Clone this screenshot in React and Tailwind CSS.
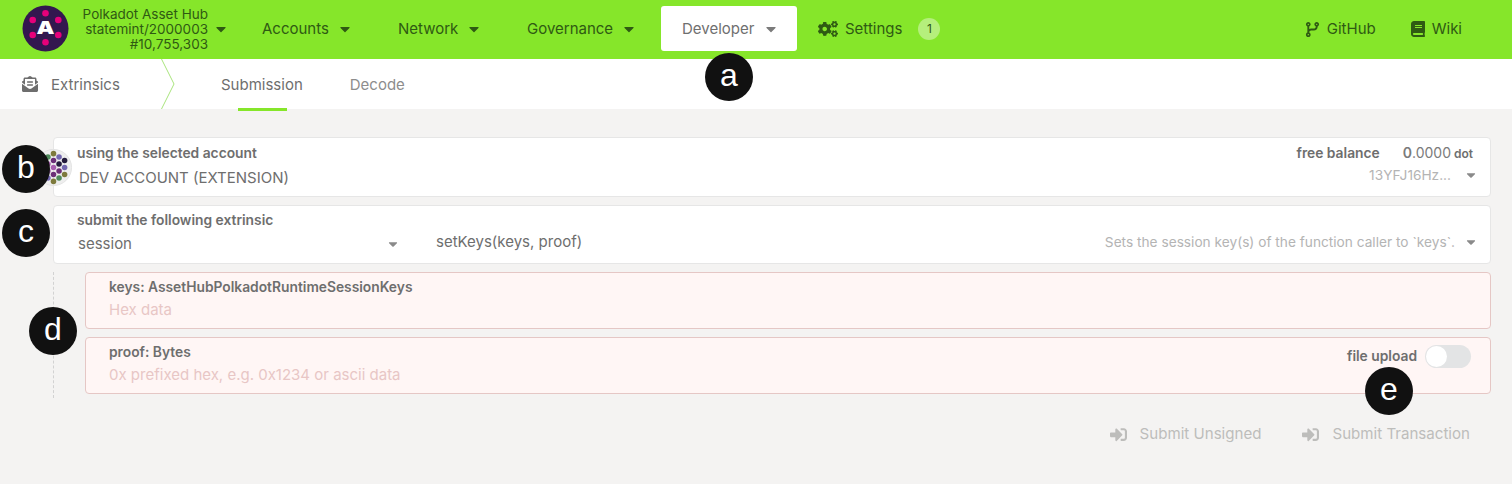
import React from "react";
import { FaCaretDown, FaCogs, FaBook, FaEnvelopeOpenText, FaSignInAlt } from "react-icons/fa";
import { FaCodeBranch } from "react-icons/fa6";

const Caret = ({ className }) => <FaCaretDown className={`text-[16px] shrink-0 ${className}`} />;

const NavItem = ({ label, width }) => (
  <div className={`flex items-center justify-between h-[45px] pl-[21px] pr-[19px] pt-[1px] text-[#2f5a13] ${width}`}>
    <span>{label}</span>
    <Caret />
  </div>
);

// little dotted identicon next to the account
const Identicon = () => {
  const dots = [
    [20, 5, "#7d7a3c"], [20, 12.5, "#6b2f78"], [20, 20, "#a85fb0"], [20, 27.5, "#6b2f78"], [20, 35, "#7d7a3c"],
    [26, 8.75, "#7468b0"], [26, 16.25, "#231a3c"], [26, 23.75, "#6b2f78"], [26, 31.25, "#4f8a5c"],
    [32, 12.5, "#231a3c"], [32, 20, "#7468b0"], [32, 27.5, "#7d7a3c"],
    [14, 8.75, "#4f8a5c"], [14, 16.25, "#a85fb0"], [14, 23.75, "#a85fb0"], [14, 31.25, "#7468b0"],
    [8, 12.5, "#4f8a5c"], [8, 20, "#a05ca8"], [8, 27.5, "#7468b0"],
  ];
  return (
    <svg viewBox="0 0 40 40" className="w-[37px] h-[37px]">
      <circle cx="20" cy="20" r="19.5" fill="#eeeeee" stroke="#e2e2e2" />
      {dots.map(([cx, cy, fill], i) => (
        <circle key={i} cx={cx} cy={cy} r="3" fill={fill} />
      ))}
    </svg>
  );
};

const Logo = () => (
  <svg viewBox="0 0 47 47" className="w-[47px] h-[47px] shrink-0">
    <circle cx="23.5" cy="23.5" r="23" fill="#33174f" />
    {[[23.5, 8.3], [10.7, 15], [36.3, 15], [10.7, 30], [36.3, 30], [23.5, 37.3]].map(([cx, cy], i) => (
      <circle key={i} cx={cx} cy={cy} r="3.3" fill="#e6007a" />
    ))}
    <text x="23.5" y="28.5" textAnchor="middle" fill="#ffffff" fontSize="18" fontWeight="900" fontFamily="Inter, sans-serif" textLength="18" lengthAdjust="spacingAndGlyphs">A</text>
  </svg>
);

const Badge = ({ letter, className }) => (
  <div className={`absolute w-[48px] h-[48px] rounded-full bg-[#111111] text-white flex items-center justify-center text-[32px] leading-none pb-[4px] z-10 font-['Liberation_Sans',sans-serif] ${className}`}>
    {letter}
  </div>
);

const SubmitButton = ({ label, className }) => (
  <div className={`flex items-center gap-[13px] text-[15.1px] text-[#bdbdbb] ${className}`}>
    <FaSignInAlt className="text-[17px]" />
    <span>{label}</span>
  </div>
);

export default function App() {
  return (
    <div className="relative w-[1512px] h-[484px] overflow-hidden bg-[#f4f3f2] font-['Inter',sans-serif] text-[15px] text-[#6e6e6e]">
      {/* Top menu */}
      <header className="flex items-center h-[59px] bg-[#86e62a] pl-[22px] pb-[2px]">
        <Logo />
        <div className="flex items-center w-[172px] pl-[12px] gap-[5px] text-[#2f5a13]">
          <div className="text-right pt-[2px] leading-[15px] text-[13.5px] w-[127px] whitespace-nowrap">
            <div>Polkadot Asset Hub</div>
            <div>statemint/2000003</div>
            <div>#10,755,303</div>
          </div>
          <Caret />
        </div>
        <div className="flex items-center gap-[5px]">
          <NavItem label="Accounts" width="w-[131px]" />
          <NavItem label="Network" width="w-[124px]" />
          <NavItem label="Governance" width="w-[150px]" />
          <div className="flex items-center justify-between w-[136px] h-[45px] pl-[21px] pr-[18px] pt-[1px] bg-white rounded-[3px] text-[#6f6f6f]">
            <span>Developer</span>
            <Caret className="text-[#7b7b7b]" />
          </div>
          <div className="flex items-center h-[45px] pl-[16px] pt-[1px] text-[#2f5a13]">
            <FaCogs className="text-[20px] mr-[7px]" />
            <span>Settings</span>
            <span className="ml-[16px] w-[22px] h-[22px] rounded-full bg-[#b5ef7c] flex items-center justify-center text-[12px]">1</span>
          </div>
        </div>
        <div className="flex items-center ml-auto pr-[50px] pt-[1px] text-[#2f5a13]">
          <FaCodeBranch className="text-[15px] mr-[7px]" />
          <span>GitHub</span>
          <FaBook className="text-[16px] ml-[34px] mr-[6px]" />
          <span>Wiki</span>
        </div>
      </header>

      {/* Tabs */}
      <nav className="flex items-center h-[50px] bg-white pl-[22px]">
        <FaEnvelopeOpenText className="text-[16px] text-[#6e6e6e] mr-[13px]" />
        <span className="w-[42px] whitespace-nowrap pt-[2px]">Extrinsics</span>
        <svg viewBox="0 0 14 50" className="w-[14px] h-[50px] ml-[68px]">
          <path d="M0.5 0 L13 25 L0.5 50" fill="none" stroke="#a9e47c" strokeWidth="1" />
        </svg>
        <div className="relative flex items-center justify-center h-full ml-[46px] pt-[2px]">
          <span>Submission</span>
          <div className="absolute left-[17px] right-[16px] -bottom-[2px] h-[3px] bg-[#86e62a]" />
        </div>
        <span className="ml-[47px] pt-[2px] text-[#8d8d8d]">Decode</span>
      </nav>

      {/* Form */}
      <main className="flex flex-col pl-[53px] pr-[21px] pt-[28px]">
        <section className="relative flex justify-between h-[60px] mb-[8px] bg-white border border-[#e6e6e6] rounded-[4px] pl-[23px] pr-[12px]">
          <div className="absolute -left-[19px] top-[11px]">
            <Identicon />
          </div>
          <div>
            <div className="text-[13.8px] font-semibold leading-[16px] mt-[7px]">using the selected account</div>
            <div className="ml-[2px] mt-[8px] text-[15px] leading-[18px]">DEV ACCOUNT (EXTENSION)</div>
          </div>
          <div className="flex flex-col items-end">
            <div className="flex items-baseline mt-[6px] pr-[5px] text-[13.8px] leading-[18px] font-semibold">
              <span>free balance</span>
              <span className="ml-[23px] text-[14px] text-[#7b7b7b]">0<span className="font-normal">.0000</span></span>
              <span className="ml-[3px] text-[12px]">dot</span>
            </div>
            <div className="flex items-center gap-[13px] mt-[2px] text-[13.7px] text-[#b4b4b4]">
              <span>13YFJ16Hz...</span>
              <Caret className="text-[#8a8a8a] !text-[14px]" />
            </div>
          </div>
        </section>

        <section className="flex h-[59px] mb-[8px] bg-white border border-[#e6e6e6] rounded-[4px] pl-[23px] pr-[12px]">
          <div className="w-[359px] pr-[36px]">
            <div className="text-[13.8px] font-semibold leading-[16px] mt-[6px]">submit the following extrinsic</div>
            <div className="flex items-center justify-between mt-[7px] leading-[18px] pl-[1px]">
              <span>session</span>
              <Caret className="text-[#8a8a8a] !text-[14px]" />
            </div>
          </div>
          <div className="flex flex-1 items-center justify-between pt-[15px]">
            <span>setKeys(keys, proof)</span>
            <div className="flex items-center gap-[9px] text-[13.7px] text-[#b4b4b4]">
              <span>Sets the session key(s) of the function caller to `keys`.</span>
              <Caret className="text-[#8a8a8a] !text-[14px]" />
            </div>
          </div>
        </section>

        <div className="flex border-l border-dashed border-[#d2d2d2] pb-[4px]">
          <div className="flex flex-col flex-1 gap-[8px] ml-[31px]">
            <section className="h-[57px] bg-[#fff6f5] border border-[#e5c7c5] rounded-[4px] pl-[23px]">
              <div className="text-[13.8px] font-semibold leading-[16px] mt-[6px]">keys: AssetHubPolkadotRuntimeSessionKeys</div>
              <div className="mt-[6px] leading-[18px] text-[#e8c6c5]">Hex data</div>
            </section>
            <section className="flex justify-between h-[57px] bg-[#fff6f5] border border-[#e5c7c5] rounded-[4px] pl-[23px] pr-[19px]">
              <div>
                <div className="text-[13.8px] font-semibold leading-[16px] mt-[6px]">proof: Bytes</div>
                <div className="mt-[6px] leading-[18px] text-[#e8c6c5]">0x prefixed hex, e.g. 0x1234 or ascii data</div>
              </div>
              <div className="flex items-center gap-[8px] h-[24px] mt-[6px]">
                <span className="text-[13.8px] font-semibold">file upload</span>
                <div className="w-[46px] h-[23px] rounded-full bg-[#e3e4e5] p-[1px]">
                  <div className="w-[21px] h-[21px] rounded-full bg-white" />
                </div>
              </div>
            </section>
          </div>
        </div>

        <div className="flex justify-end mt-[25px] pr-[21px]">
          <SubmitButton label="Submit Unsigned" className="mr-[41px]" />
          <SubmitButton label="Submit Transaction" />
        </div>
      </main>

      <Badge letter="a" className="left-[705px] top-[53px]" />
      <Badge letter="b" className="left-[2px] top-[145px]" />
      <Badge letter="c" className="left-[2px] top-[209px]" />
      <Badge letter="d" className="left-[29px] top-[307px]" />
      <Badge letter="e" className="left-[1365px] top-[367px]" />
    </div>
  );
}
